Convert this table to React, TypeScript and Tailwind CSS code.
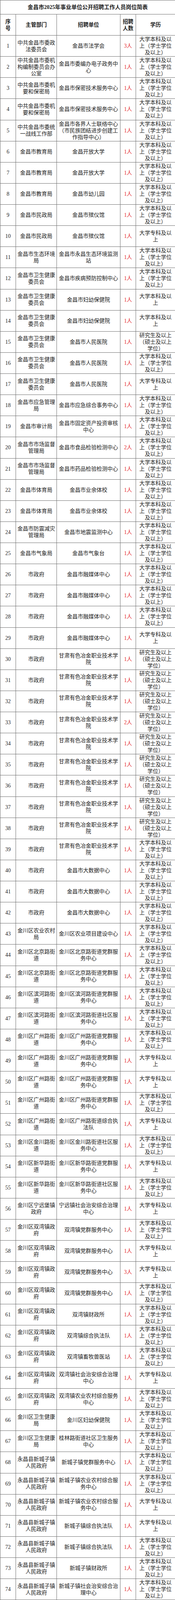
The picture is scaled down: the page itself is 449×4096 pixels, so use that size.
import React from 'react';

// 学历要求
const BK_XW = '大学本科及以上（学士学位及以上）';
const BK = '大学本科及以上';
const ZK = '大学专科及以上';
const YJS = '研究生及以上（硕士及以上学位）';

const GANSU = '甘肃有色冶金职业技术学院';

interface PostRow {
  dept: string;
  unit: string;
  count: number;
  edu: string;
}

const r = (dept: string, unit: string, count: number, edu: string): PostRow => ({ dept, unit, count, edu });

const rows: PostRow[] = [
  r('中共金昌市委政法委员会', '金昌市法学会', 3, BK_XW),
  r('中共金昌市委机构编制委员会办公室', '金昌市委编办电子政务中心', 1, BK_XW),
  r('中共金昌市委机要和保密局', '金昌市保密技术服务中心', 1, BK_XW),
  r('中共金昌市委机要和保密局', '金昌市保密技术服务中心', 1, BK_XW),
  r('中共金昌市委统一战线工作部', '金昌市各界人士联络中心（市民族团结进步创建工作指导中心）', 1, BK_XW),
  r('金昌市教育局', '金昌开放大学', 1, BK_XW),
  r('金昌市教育局', '金昌开放大学', 1, BK_XW),
  r('金昌市教育局', '金昌市幼儿园', 1, BK_XW),
  r('金昌市民政局', '金昌市殡仪馆', 1, BK_XW),
  r('金昌市民政局', '金昌市殡仪馆', 1, ZK),
  r('金昌市生态环境局', '金昌市永昌生态环境监测站', 1, BK_XW),
  r('金昌市卫生健康委员会', '金昌市疾病预防控制中心', 1, BK_XW),
  r('金昌市卫生健康委员会', '金昌市妇幼保健院', 1, BK),
  r('金昌市卫生健康委员会', '金昌市妇幼保健院', 1, BK),
  r('金昌市卫生健康委员会', '金昌市人民医院', 1, YJS),
  r('金昌市卫生健康委员会', '金昌市人民医院', 1, BK_XW),
  r('金昌市卫生健康委员会', '金昌市人民医院', 1, ZK),
  r('金昌市应急管理局', '金昌市应急综合事务中心', 1, BK_XW),
  r('金昌市审计局', '金昌市固定资产投资审核中心', 1, BK_XW),
  r('金昌市市场监督管理局', '金昌市食品检验检测中心', 2, BK_XW),
  r('金昌市市场监督管理局', '金昌市药品检验检测中心', 1, BK_XW),
  r('金昌市体育局', '金昌市业余体校', 1, BK_XW),
  r('金昌市体育局', '金昌市业余体校', 1, BK_XW),
  r('金昌市防震减灾管理局', '金昌市地震监测中心', 1, BK_XW),
  r('金昌市气象局', '金昌市气象台', 1, BK_XW),
  r('市政府', '金昌市融媒体中心', 1, BK_XW),
  r('市政府', '金昌市融媒体中心', 1, BK_XW),
  r('市政府', '金昌市融媒体中心', 1, BK_XW),
  r('市政府', '金昌市融媒体中心', 1, ZK),
  r('市政府', GANSU, 1, YJS),
  r('市政府', GANSU, 1, YJS),
  r('市政府', GANSU, 1, YJS),
  r('市政府', GANSU, 2, YJS),
  r('市政府', GANSU, 1, YJS),
  r('市政府', GANSU, 1, YJS),
  r('市政府', GANSU, 1, YJS),
  r('市政府', GANSU, 1, YJS),
  r('市政府', GANSU, 1, YJS),
  r('市政府', GANSU, 1, BK_XW),
  r('市政府', '金昌市大数据中心', 1, BK_XW),
  r('市政府', '金昌市大数据中心', 1, BK_XW),
  r('市政府', '金昌市大数据中心', 1, BK_XW),
  r('金川区农业农村局', '金川区农业项目建设中心', 1, BK_XW),
  r('金川区北京路街道', '金川区北京路街道党群服务中心', 1, BK_XW),
  r('金川区北京路街道', '金川区北京路街道党群服务中心', 1, BK_XW),
  r('金川区滨河路街道', '金川区滨河路街道党群服务中心', 1, BK_XW),
  r('金川区滨河路街道', '金川区滨河路街道社区服务中心', 1, BK_XW),
  r('金川区广州路街道', '金川区广州路街道党群服务中心', 1, BK_XW),
  r('金川区广州路街道', '金川区广州路街道党群服务中心', 1, ZK),
  r('金川区广州路街道', '金川区广州路街道党群服务中心', 1, ZK),
  r('金川区广州路街道', '金川区广州路街道党群服务中心', 1, BK_XW),
  r('金川区广州路街道', '金川区广州路街道综合执法队', 1, ZK),
  r('金川区金川路街道', '金川区金川路街道社区服务中心', 1, BK_XW),
  r('金川区新华路街道', '金川区新华路街道党群服务中心', 1, ZK),
  r('金川区新华路街道', '金川区新华路街道社区服务中心', 1, BK_XW),
  r('金川区宁远堡镇政府', '宁远镇社会治安综合治理中心', 1, ZK),
  r('金川区双湾镇政府', '双湾镇党群服务中心', 1, BK_XW),
  r('金川区双湾镇政府', '双湾镇党群服务中心', 1, ZK),
  r('金川区双湾镇政府', '双湾镇党群服务中心', 3, ZK),
  r('金川区双湾镇政府', '双湾镇党群服务中心', 1, BK_XW),
  r('金川区双湾镇政府', '双湾镇财政所', 1, BK_XW),
  r('金川区双湾镇政府', '双湾镇综合执法队', 1, BK_XW),
  r('金川区双湾镇政府', '双湾镇畜牧兽医站', 1, BK_XW),
  r('金川区双湾镇政府', '双湾镇社会治安综合治理中心', 1, ZK),
  r('金川区双湾镇政府', '双湾镇农业农村综合服务中心', 1, BK_XW),
  r('金川区卫生健康局', '金川区妇幼保健院', 1, BK_XW),
  r('金川区卫生健康局', '桂林路街道社区卫生服务中心', 1, BK_XW),
  r('永昌县新城子镇人民政府', '新城子镇党群服务中心', 1, BK_XW),
  r('永昌县新城子镇人民政府', '新城子镇农业农村综合服务中心', 1, BK_XW),
  r('永昌县新城子镇人民政府', '新城子镇农业农村综合服务中心', 1, ZK),
  r('永昌县新城子镇人民政府', '新城子镇综合执法队', 1, ZK),
  r('永昌县新城子镇人民政府', '新城子镇综合执法队', 1, BK_XW),
  r('永昌县新城子镇人民政府', '新城子镇财政所', 1, BK_XW),
  r('永昌县新城子镇人民政府', '新城子镇社会治安综合治理中心', 1, BK_XW),
];

const cell = 'border border-[#6e6e6e] text-center align-middle p-0';

export default function App() {
  return (
    <div className="w-[449px] bg-white text-[#1c1c1c] font-['Liberation_Serif','Noto_Sans_CJK_SC',serif]">
      <table className="w-[449px] table-fixed border-collapse">
        <colgroup>
          <col className="w-[40px]" />
          <col className="w-[105px]" />
          <col className="w-[163px]" />
          <col className="w-[40px]" />
          <col className="w-[101px]" />
        </colgroup>
        <thead>
          <tr className="h-[36px]">
            <th colSpan={5} className={`${cell} text-[14px] font-bold leading-[18px]`}>
              金昌市2025年事业单位公开招聘工作人员岗位简表
            </th>
          </tr>
          <tr className="h-[54px] text-[13.6px] font-bold leading-[17px]">
            <th className={`${cell} px-[2px]`}>
              序<br />号
            </th>
            <th className={`${cell} px-[2px]`}>主管部门</th>
            <th className={`${cell} px-[4px]`}>招聘单位</th>
            <th className={`${cell} px-[2px]`}>招聘人数</th>
            <th className={`${cell} px-[6px]`}>学历</th>
          </tr>
        </thead>
        <tbody className="text-[13.8px] leading-[17px]">
          {rows.map((row, i) => (
            <tr key={i} className="h-[54.14px]">
              <td className={`${cell} text-[14px]`}>{i + 1}</td>
              <td className={`${cell} px-[2px]`}>{row.dept}</td>
              <td className={`${cell} px-[4px]`}>{row.unit}</td>
              <td className={`${cell} px-[2px] text-[#e3262b]`}>{row.count}人</td>
              <td className={`${cell} px-[6px]`}>{row.edu}</td>
            </tr>
          ))}
        </tbody>
      </table>
    </div>
  );
}
